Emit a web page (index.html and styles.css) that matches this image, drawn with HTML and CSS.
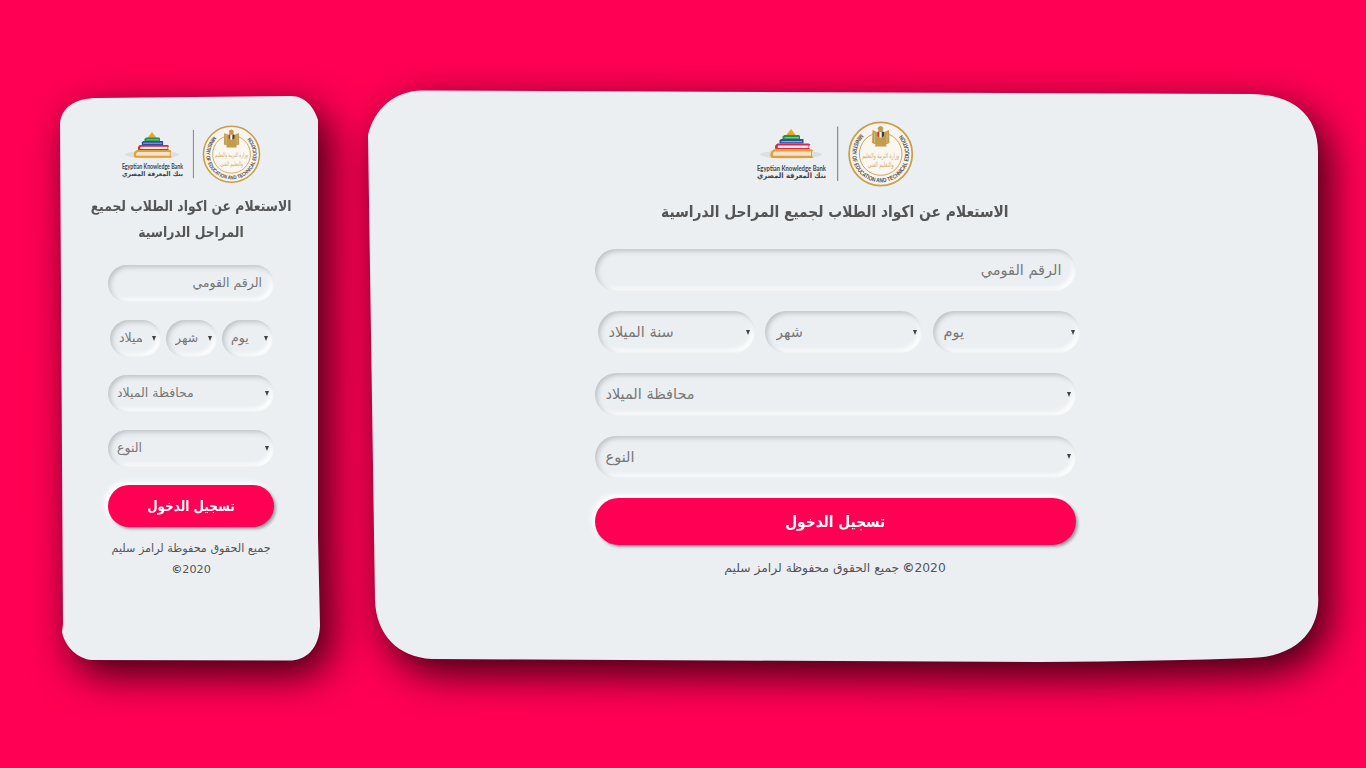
FILE: index.html
```html
<!DOCTYPE html>
<html lang="ar">
<head>
<meta charset="utf-8">
<title>الاستعلام عن اكواد الطلاب</title>
<link rel="stylesheet" href="styles.css">
</head>
<body>
<main class="stage">
  <section class="panel phone">
    <svg class="backdrop" viewBox="0 0 260 565"><path d="M0 28C1 12 14 2 38 2L231 0C245 0 254 11 258 24L258 440L260 530C259 551 248 563 232 564.500L32 564C18 563 5 551 2 536L3 528Z"/></svg>
    <svg class="logo" viewBox="0 0 158 66">
      <g id="logo">
        <ellipse cx="35" cy="33.500" rx="31" ry="4.200" fill="#dcdedf"/>
        <path d="M35 8l5.500 7h-11z" fill="#e5aa22"/>
        <path d="M28.500 14H43l1 1v3.500H26.500v-3z" fill="#25924c"/>
        <path d="M29 16.300h14v.9H28z" fill="#9fd0ae"/>
        <path d="M25 18h22.500v4.600H23.500v-3z" fill="#304f9e"/>
        <path d="M25.500 19.900h20.500v1.300H25z" fill="#8fa5d6"/>
        <path d="M21.500 22.600h31l2 1.200-1.300 1v2.200l1 1.200H19.500c-1.200-2 0-4.800 2-5.600z" fill="#d52847"/>
        <path d="M22.500 24.400H52.500v2.600H22c-.8-.8-.5-1.800.5-2.600z" fill="#f6eced"/>
        <path d="M18 28.200h37.500l1.800 1.300-1.300 1.300v3.700l1.300 2.500H16c-3-2-1.500-7.500 2-8.800z" fill="#e3a128"/>
        <path d="M18.500 30.500h36.500v4.300H17.500c-1.200-1-.7-3.200 1-4.300z" fill="#f3e2d3"/>
        <text class="logo-en" x="1" y="49.500" textLength="69" lengthAdjust="spacingAndGlyphs">Egyptian Knowledge Bank</text>
        <text class="logo-ar" x="35.500" y="57.300" text-anchor="middle" textLength="69" lengthAdjust="spacingAndGlyphs">بنك المعرفة المصري</text>
        <path d="M81.700 5.500v54.500" stroke="#777" stroke-width="1"/>
        <circle cx="124.700" cy="33" r="31.600" fill="#f7f3ee" stroke="#c9a04a" stroke-width="1.800"/>
        <circle cx="124.700" cy="33" r="21.300" fill="#faf6f0" stroke="#cda656" stroke-width="1"/>
        <path id="ring" d="M104.700 12.800A28.400 28.400 0 1 0 144.700 12.800" fill="none"/>
        <text class="ring-text"><textPath href="#ring" textLength="132" lengthAdjust="spacingAndGlyphs">MINISTRY OF EDUCATION AND TECHNICAL EDUCATION</textPath></text>
        <path d="M116.500 9l5 2.200L122.500 9l-1-1.200 1-2 2.200-.8 2 .9.800 2.100-.8 1 1 2.200L133 9l.4 13-3.600 1.500 1.200 2h-12.400l1.200-2-3.700-1.500z" fill="#c29c4e"/>
        <path d="M121.500 11h2v5.500l-2-1.500z" fill="#c7343d"/>
        <path d="M123.500 11h2.300v5.500h-2.300z" fill="#fff"/>
        <path d="M125.800 11h2.200v4l-2.200 1.500z" fill="#403b35"/>
        <path d="M118.700 11v11M131 11v11" stroke="#e4cd98" stroke-width=".6"/>
        <text class="seal-ar" x="124.700" y="36.500" text-anchor="middle" textLength="37" lengthAdjust="spacingAndGlyphs">وزارة التربية والتعليم</text>
        <text class="seal-ar" x="124.700" y="46" text-anchor="middle" textLength="26" lengthAdjust="spacingAndGlyphs">والتعليم الفني</text>
      </g>
    </svg>
    <h1 class="title"><span>الاستعلام عن اكواد الطلاب لجميع</span><span>المراحل الدراسية</span></h1>
    <form class="form">
      <div class="field input" dir="rtl"><span class="label">الرقم القومي</span></div>
      <div class="trio">
        <div class="field"><span class="label">سنة الميلاد</span><i class="arrow"></i></div>
        <div class="field"><span class="label">شهر</span><i class="arrow"></i></div>
        <div class="field"><span class="label">يوم</span><i class="arrow"></i></div>
      </div>
      <div class="field"><span class="label">محافظة الميلاد</span><i class="arrow"></i></div>
      <div class="field"><span class="label">النوع</span><i class="arrow"></i></div>
      <div class="submit"><span>تسجيل الدخول</span></div>
    </form>
    <footer class="foot"><span class="rights">جميع الحقوق محفوظة لرامز سليم</span><span class="year"><b>©</b>2020</span></footer>
  </section>
  <section class="panel wide">
    <svg class="backdrop" viewBox="0 0 951 572"><path d="M1 45C7 20 26 1 55 .5L883 4C925 4 951 24 951 62L951 504C954 540 930 567 883 568Q800 571 673 572L65 569C30 567 9 544 8 510Z"/></svg>
    <svg class="logo" viewBox="0 0 158 66"><use href="#logo"/></svg>
    <h1 class="title"><span>الاستعلام عن اكواد الطلاب لجميع المراحل الدراسية</span></h1>
    <form class="form">
      <div class="field input" dir="rtl"><span class="label">الرقم القومي</span></div>
      <div class="trio">
        <div class="field"><span class="label">سنة الميلاد</span><i class="arrow"></i></div>
        <div class="field"><span class="label">شهر</span><i class="arrow"></i></div>
        <div class="field"><span class="label">يوم</span><i class="arrow"></i></div>
      </div>
      <div class="field"><span class="label">محافظة الميلاد</span><i class="arrow"></i></div>
      <div class="field"><span class="label">النوع</span><i class="arrow"></i></div>
      <div class="submit"><span>تسجيل الدخول</span></div>
    </form>
    <footer class="foot"><span class="rights">جميع الحقوق محفوظة لرامز سليم</span><span class="year"><b>©</b>2020</span></footer>
  </section>
</main>
</body>
</html>
```
FILE: styles.css
```css
* { box-sizing: border-box; }
body {
  margin: 0;
  height: 768px;
  overflow: hidden;
  background: #ff0054;
  color: #555;
  font-family: "DejaVu Sans", sans-serif;
}
.stage { display: flex; gap: 47px; align-items: flex-start; padding: 90px 0 0 60px; }
.panel { position: relative; display: flex; flex-direction: column; align-items: center; }
.backdrop {
  position: absolute; inset: 0; width: 100%; height: 100%;
  overflow: visible; z-index: -1;
  fill: #ebeff2;
  filter: drop-shadow(10px 14px 20px rgba(0, 0, 0, .78));
}
.logo { display: block; }
.title { margin: 0; display: flex; flex-direction: column; align-items: center; white-space: nowrap; font-weight: bold; }
.title span { transform: scaleX(.865); }
.form { display: flex; flex-direction: column; margin: 0; }
.trio { display: flex; }
.field {
  display: flex; align-items: center; justify-content: space-between;
  border-radius: 22px;
  box-shadow: inset 2px 2px 5px #bcc0c3, inset -3px -3px 5px #fff;
  color: #777;
}
.label { min-width: 0; overflow: hidden; white-space: nowrap; line-height: 26px; }
.arrow { flex: none; border: solid transparent; border-width: 5px 2.5px 0; border-top-color: #444; }
.submit {
  display: flex; align-items: center; justify-content: center;
  background: #ff0054; color: #fff; font-weight: bold; border-radius: 24px;
  box-shadow: 2px 2px 3px #9a9ea1, -3px -3px 6px #fff;
}
.submit span { transform: scaleX(.86); }
.foot { display: flex; white-space: nowrap; }
.logo-en { font: bold 7.500px Lato, sans-serif; fill: #444; }
.logo-ar { font: bold 7.500px "DejaVu Sans", sans-serif; fill: #444; }
.ring-text { font: bold 6px "Liberation Sans", sans-serif; fill: #57524b; }
.seal-ar { font: 7px "DejaVu Sans", sans-serif; fill: #cfae6c; }

.phone { width: 260px; height: 565px; margin-top: 6px; padding: 29px 0 0 2px; }
.phone .logo { width: 140px; height: 58.500px; }
.phone .title { font-size: 14.300px; line-height: 26px; padding-top: 9px; }
.phone .form { width: 166px; gap: 18px; margin-top: 20px; }
.phone .field { height: 37px; padding: 0 5px 0 9px; font-size: 12.500px; }
.phone .input { height: 37px; padding: 0 12px; }
.phone .trio { gap: 5px; padding-left: 2px; }
.phone .trio .field { width: 51px; }
.phone .trio .label { width: 23px; }
.phone .submit { height: 42px; font-size: 14px; }
.phone .foot { flex-direction: column; align-items: center; font-size: 11.200px; line-height: 21px; margin-top: 11px; }

.wide { width: 951px; height: 572px; padding: 31px 15px 0 0; }
.wide .logo { width: 158px; height: 66px; }
.wide .title { font-size: 16px; line-height: 30px; padding-top: 10px; }
.wide .form { width: 481px; gap: 20px; margin-top: 22px; }
.wide .field { height: 42.300px; padding: 0 5px 0 11px; font-size: 14.500px; }
.wide .input { height: 42px; padding: 0 14px; }
.wide .trio { gap: 10.500px; padding-left: 3px; margin-right: -5px; }
.wide .trio .field { width: 157px; }
.wide .trio .field:last-child { width: 147px; }
.wide .submit { height: 47px; font-size: 16px; }
.wide .foot { gap: 3px; font-size: 12.300px; line-height: 22px; margin-top: 12px; }
```
